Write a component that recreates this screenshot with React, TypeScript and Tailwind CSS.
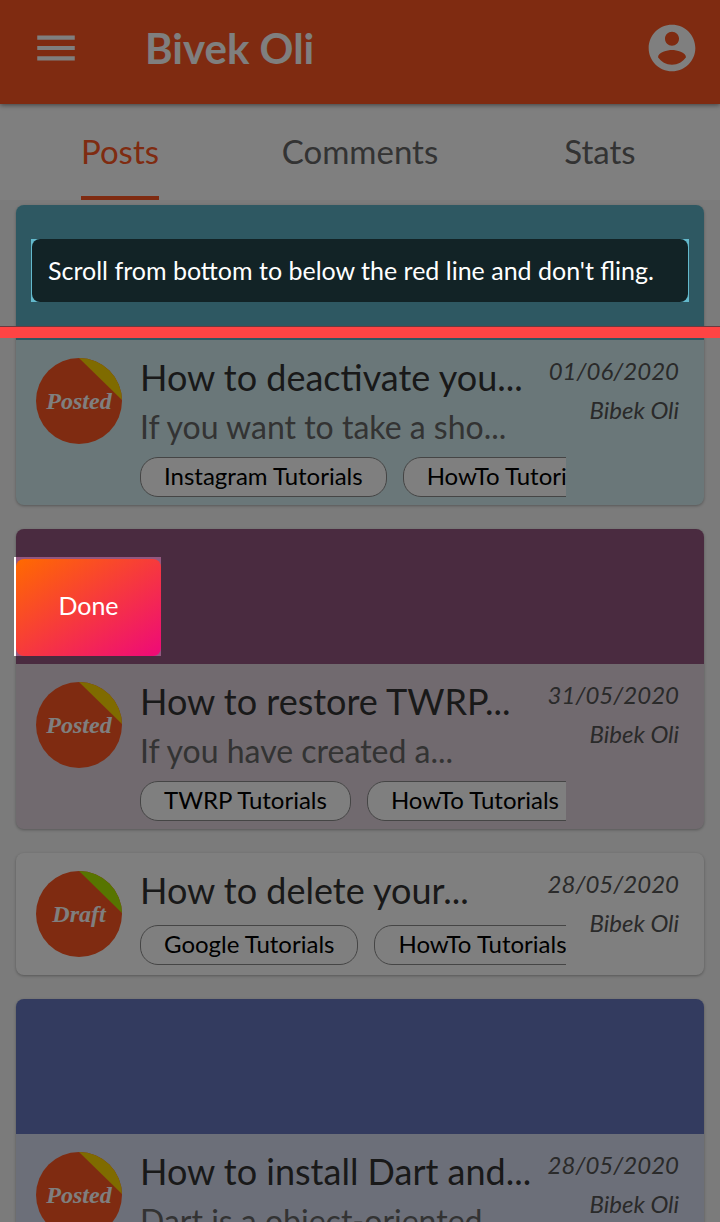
import React from "react";
import { MdMenu } from "react-icons/md";

type Post = {
  title: string;
  excerpt?: string;
  tags: string[];
  date: string;
  author: string;
  status: "Posted" | "Draft";
  cover?: string;
  tint: string;
  overlay?: React.ReactNode;
};

const posts: Post[] = [
  {
    title: "How to deactivate you...",
    excerpt: "If you want to take a sho...",
    tags: ["Instagram Tutorials", "HowTo Tutorials"],
    date: "01/06/2020",
    author: "Bibek Oli",
    status: "Posted",
    cover: "bg-[#5cb1c5]",
    tint: "bg-[#d5eff2]",
    overlay: <Hint />,
  },
  {
    title: "How to restore TWRP...",
    excerpt: "If you have created a...",
    tags: ["TWRP Tutorials", "HowTo Tutorials"],
    date: "31/05/2020",
    author: "Bibek Oli",
    status: "Posted",
    cover: "bg-[#945780]",
    tint: "bg-[#e3d5df]",
    overlay: <DoneButton />,
  },
  {
    title: "How to delete your...",
    tags: ["Google Tutorials", "HowTo Tutorials"],
    date: "28/05/2020",
    author: "Bibek Oli",
    status: "Draft",
    tint: "bg-white",
  },
  {
    title: "How to install Dart and...",
    excerpt: "Dart is a object-oriented...",
    tags: ["Dart Tutorials", "HowTo Tutorials"],
    date: "28/05/2020",
    author: "Bibek Oli",
    status: "Posted",
    cover: "bg-[#6676be]",
    tint: "bg-[#d9dff2]",
  },
];

function Hint() {
  return (
    <div className="relative z-20 mx-[15px] min-w-0 flex-1 bg-[#63b9cc] px-px">
      <p className="rounded-lg bg-[#122326] px-4 text-[25px] leading-[63px] whitespace-nowrap text-white">
        Scroll from bottom to below the red line and don't fling.
      </p>
    </div>
  );
}

function DoneButton() {
  return (
    <div className="absolute top-7 -left-0.5 z-20 border-l-2 border-white bg-[#94577f] pt-0.5">
      <button
        type="button"
        className="block h-[97px] w-[145px] rounded-lg bg-linear-to-br/srgb from-[#ff6a00] to-[#ee0979] pb-1 text-[25px] text-white"
      >
        Done
      </button>
    </div>
  );
}

function StatusBadge({ status }: { status: Post["status"] }) {
  return (
    <div className="relative mt-[18px] size-[86px] shrink-0 overflow-hidden rounded-full">
      <svg viewBox="0 0 86 86" className="size-full" aria-hidden="true">
        <rect width="86" height="86" fill="#ff5722" />
        <path d="M43 0 86 42V0Z" fill={status === "Posted" ? "#ffd600" : "#aeea00"} />
      </svg>
      <span className="absolute inset-0 flex items-center justify-center font-['Liberation_Serif',serif] text-2xl font-bold text-white italic">
        {status}
      </span>
    </div>
  );
}

function PostCard({ post }: { post: Post }) {
  return (
    <article className={`rounded-lg shadow-[0_1px_3px_rgba(0,0,0,0.3)] ${post.tint}`}>
      {post.cover && (
        <div className={`relative flex h-[135px] items-start rounded-t-lg pt-[34px] ${post.cover}`}>
          {post.overlay}
        </div>
      )}
      <div className="flex min-h-[122px] pr-[25px] pb-2 pl-5">
        <StatusBadge status={post.status} />
        <div className="ml-[18px] min-w-0 flex-1 pt-[13px] whitespace-nowrap">
          <h2 className="text-4xl leading-[48px] text-[#333333]">{post.title}</h2>
          {post.excerpt && <p className="pt-1.5 text-[32px] leading-[39px] text-[#666666]">{post.excerpt}</p>}
          <ul className="mt-[11px] flex gap-4 overflow-hidden">
            {post.tags.map((tag) => (
              <li
                key={tag}
                className="h-10 shrink-0 rounded-[18px] border border-[#8a8a8a] bg-white px-[23px] text-2xl leading-[36px] text-black"
              >
                {tag}
              </li>
            ))}
          </ul>
        </div>
        <div className="flex w-[113px] shrink-0 flex-col items-end pt-[11px] text-2xl leading-[39px] whitespace-nowrap text-[#555555] italic">
          <time>{post.date}</time>
          <span>{post.author}</span>
        </div>
      </div>
    </article>
  );
}

const tabs = ["Posts", "Comments", "Stats"];

export default function App() {
  return (
    <div className="relative h-screen overflow-hidden bg-[#f6f6f6] font-[Lato,sans-serif]">
      <header className="relative flex h-[104px] items-center bg-[#ff5722] pr-5 pb-2 pl-[31px] text-white shadow-[0_1px_5px_rgba(0,0,0,0.5)]">
        <button type="button" aria-label="Menu">
          <MdMenu className="size-[50px]" />
        </button>
        <h1 className="ml-16 flex-1 text-[42px] font-bold">Bivek Oli</h1>
        <button type="button" aria-label="Account">
          <svg viewBox="0 0 24 24" className="size-14" fill="currentColor">
            <path d="M12 2C6.48 2 2 6.48 2 12s4.48 10 10 10 10-4.48 10-10S17.52 2 12 2zm0 3c1.66 0 3 1.34 3 3s-1.34 3-3 3-3-1.34-3-3 1.34-3 3-3zm0 14.2c-2.5 0-4.71-1.28-6-3.22.03-1.99 4-3.08 6-3.08 1.99 0 5.97 1.09 6 3.08-1.29 1.94-3.5 3.22-6 3.22z" />
          </svg>
        </button>
      </header>
      <nav className="grid h-24 grid-cols-3 bg-white text-[33px]">
        {tabs.map((tab, i) => (
          <button
            key={tab}
            type="button"
            className={
              i === 0
                ? "justify-self-center border-b-4 border-[#ff5722] pt-1 text-[#ff5722]"
                : "justify-self-center border-b-4 border-transparent pt-1 text-[#666666]"
            }
          >
            {tab}
          </button>
        ))}
      </nav>
      <main className="flex flex-col gap-6 px-4 pt-[5px]">
        {posts.map((post) => (
          <PostCard key={post.title} post={post} />
        ))}
      </main>
      <div className="absolute inset-0 z-10 bg-black/50" />
      <div className="absolute inset-x-0 top-[326px] z-20 h-3 border-t border-[#6b3a40] bg-[#ff4444]" />
    </div>
  );
}
